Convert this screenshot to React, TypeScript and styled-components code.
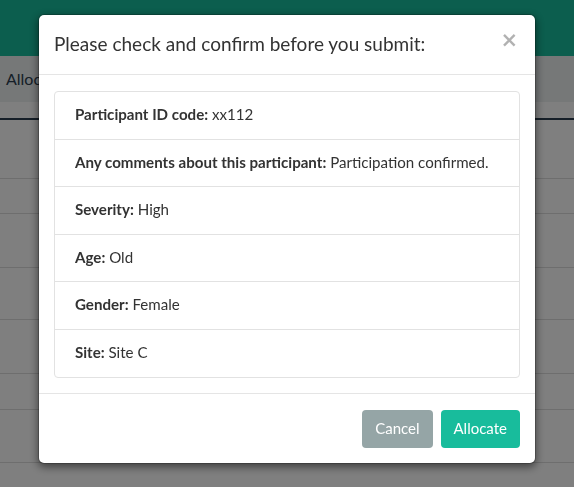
import { createGlobalStyle, styled } from "styled-components";

const GlobalStyle = createGlobalStyle`
  * { box-sizing: border-box; }
  html, body { margin: 0; padding: 0; }
  body {
    font-family: Lato, "Open Sans", "Liberation Sans", sans-serif;
    font-size: 15px;
    line-height: 1.42857;
    color: #2c3e50;
    background: #ffffff;
    overflow: hidden;
  }
`;

const Page = styled.div`
  width: 574px;
  height: 487px;
  overflow: hidden;
`;

const Navbar = styled.div`
  height: 56px;
  background: #18bc9c;
`;

const SubBar = styled.div`
  display: flex;
  align-items: center;
  height: 46px;
  padding-left: 6px;
  background: #ecf0f1;
  font-size: 16px;
  color: #2c3e50;
`;

const Table = styled.div`
  margin-top: 16px;
  border-top: 2px solid #2c3e50;
`;

const TableRow = styled.div<{ $h: number }>`
  height: ${(p) => p.$h}px;
  border-bottom: 1px solid #dddddd;
`;

const Backdrop = styled.div`
  position: fixed;
  inset: 0;
  display: flex;
  justify-content: center;
  align-items: flex-start;
  padding-top: 14px;
  background: rgba(0, 0, 0, 0.5);
`;

const Dialog = styled.div`
  width: 498px;
  background: #ffffff;
  border: 1px solid rgba(0, 0, 0, 0.2);
  border-radius: 6px;
  box-shadow: 0 3px 9px rgba(0, 0, 0, 0.5);
  background-clip: padding-box;
`;

const Header = styled.div`
  display: flex;
  align-items: flex-start;
  justify-content: space-between;
  padding: 15px 15px 16px;
  border-bottom: 1px solid #e5e5e5;
`;

const Title = styled.h4`
  margin: 0;
  font-size: 19px;
  font-weight: 400;
  line-height: 28px;
  color: #333333;
`;

const Close = styled.button`
  margin-top: 0;
  padding: 0 2px;
  border: 0;
  background: transparent;
  font-family: "DejaVu Sans", sans-serif;
  font-size: 21px;
  font-weight: 700;
  line-height: 1;
  color: #000000;
  opacity: 0.3;
  cursor: pointer;
`;

const Body = styled.div`
  padding: 16px 15px 15px;
`;

const List = styled.ul`
  margin: 0;
  padding: 0;
  list-style: none;
`;

const Item = styled.li`
  padding: 12px 20px 13.2px;
  margin-bottom: -1px;
  border: 1px solid #e2e2e2;
  font-size: 15.1px;
  line-height: 21.4px;
  color: #333333;
  &:first-child {
    border-top-left-radius: 4px;
    border-top-right-radius: 4px;
  }
  &:last-child {
    margin-bottom: 0;
    border-bottom-left-radius: 4px;
    border-bottom-right-radius: 4px;
  }
  & b {
    font-weight: 700;
  }
`;

const Footer = styled.div`
  display: flex;
  justify-content: flex-end;
  gap: 8px;
  padding: 16px 15px 15px;
  border-top: 1px solid #e5e5e5;
`;

const Button = styled.button<{ $variant: "default" | "success" }>`
  padding: 7.5px 12px;
  border: 1px solid transparent;
  border-radius: 4px;
  font-family: inherit;
  font-size: 15px;
  line-height: 1.42857;
  color: #ffffff;
  background: ${(p) => (p.$variant === "success" ? "#18bc9c" : "#95a5a6")};
  cursor: pointer;
`;

const rows = [59, 35, 54, 52, 54, 36, 53];

const details: [string, string][] = [
  ["Participant ID code:", "xx112"],
  ["Any comments about this participant:", "Participation confirmed."],
  ["Severity:", "High"],
  ["Age:", "Old"],
  ["Gender:", "Female"],
  ["Site:", "Site C"],
];

export default function App() {
  return (
    <>
      <GlobalStyle />
      <Page>
        <Navbar />
        <SubBar>Allocations</SubBar>
        <Table>
          {rows.map((h, i) => (
            <TableRow key={i} $h={h} />
          ))}
        </Table>
      </Page>
      <Backdrop>
        <Dialog>
          <Header>
            <Title>Please check and confirm before you submit:</Title>
            <Close aria-label="Close">×</Close>
          </Header>
          <Body>
            <List>
              {details.map(([label, value]) => (
                <Item key={label}>
                  <b>{label}</b> {value}
                </Item>
              ))}
            </List>
          </Body>
          <Footer>
            <Button $variant="default">Cancel</Button>
            <Button $variant="success">Allocate</Button>
          </Footer>
        </Dialog>
      </Backdrop>
    </>
  );
}
